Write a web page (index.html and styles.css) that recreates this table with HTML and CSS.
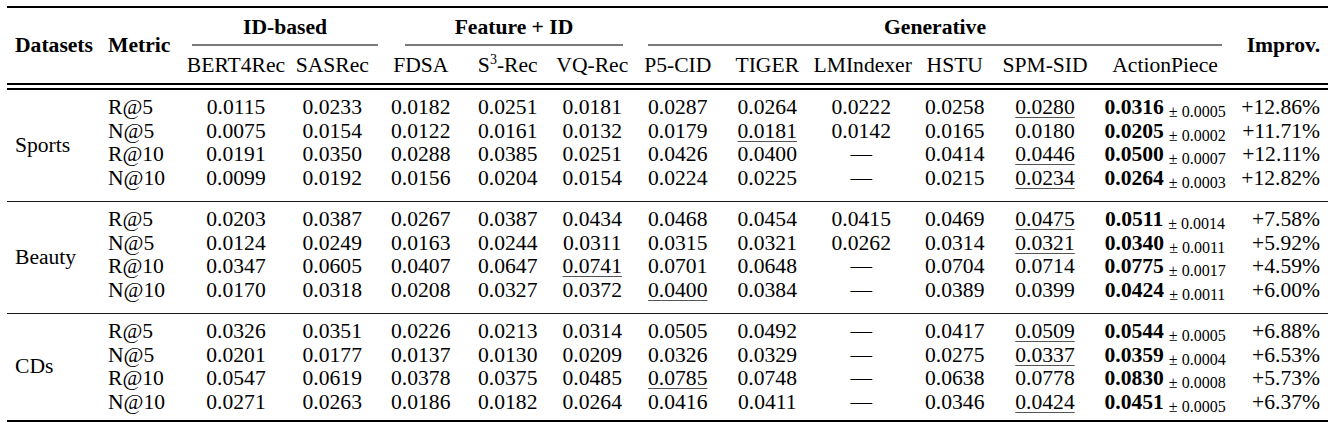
FILE: index.html
```html
<!DOCTYPE html>
<html lang="en">
<head>
    <meta charset="UTF-8">
    <meta name="viewport" content="width=device-width, initial-scale=1.0">
    <title>Results - ActionPiece</title>
    <link rel="stylesheet" href="styles.css">
</head>
<body>
    <table class="results">
        <colgroup>
            <col class="c-dataset">
            <col class="c-metric">
            <col class="c-bert">
            <col class="c-sas">
            <col class="c-fdsa">
            <col class="c-s3">
            <col class="c-vq">
            <col class="c-p5">
            <col class="c-tiger">
            <col class="c-lmi">
            <col class="c-hstu">
            <col class="c-spm">
            <col class="c-ap">
            <col class="c-imp">
        </colgroup>
        <thead>
            <tr class="groups">
                <th rowspan="2" class="span left">Datasets</th>
                <th rowspan="2" class="span left">Metric</th>
                <th colspan="2"><div class="cmid cmid-id">ID-based</div></th>
                <th colspan="3"><div class="cmid cmid-feat">Feature + ID</div></th>
                <th colspan="6"><div class="cmid cmid-gen">Generative</div></th>
                <th rowspan="2" class="span right">Improv.</th>
            </tr>
            <tr class="models">
                <th>BERT4Rec</th>
                <th>SASRec</th>
                <th>FDSA</th>
                <th>S<sup>3</sup>-Rec</th>
                <th>VQ-Rec</th>
                <th>P5-CID</th>
                <th>TIGER</th>
                <th>LMIndexer</th>
                <th>HSTU</th>
                <th>SPM-SID</th>
                <th>ActionPiece</th>
            </tr>
        </thead>

        <!-- Sports -->
        <tbody>
            <tr class="first">
                <td rowspan="4" class="name left">Sports</td>
                <td class="left">R@5</td>
                <td>0.0115</td><td>0.0233</td><td>0.0182</td><td>0.0251</td><td>0.0181</td>
                <td>0.0287</td><td>0.0264</td><td>0.0222</td><td>0.0258</td><td><u>0.0280</u></td>
                <td><b>0.0316</b><sub>± 0.0005</sub></td>
                <td class="right">+12.86%</td>
            </tr>
            <tr>
                <td class="left">N@5</td>
                <td>0.0075</td><td>0.0154</td><td>0.0122</td><td>0.0161</td><td>0.0132</td>
                <td>0.0179</td><td><u>0.0181</u></td><td>0.0142</td><td>0.0165</td><td>0.0180</td>
                <td><b>0.0205</b><sub>± 0.0002</sub></td>
                <td class="right">+11.71%</td>
            </tr>
            <tr>
                <td class="left">R@10</td>
                <td>0.0191</td><td>0.0350</td><td>0.0288</td><td>0.0385</td><td>0.0251</td>
                <td>0.0426</td><td>0.0400</td><td>—</td><td>0.0414</td><td><u>0.0446</u></td>
                <td><b>0.0500</b><sub>± 0.0007</sub></td>
                <td class="right">+12.11%</td>
            </tr>
            <tr class="last">
                <td class="left">N@10</td>
                <td>0.0099</td><td>0.0192</td><td>0.0156</td><td>0.0204</td><td>0.0154</td>
                <td>0.0224</td><td>0.0225</td><td>—</td><td>0.0215</td><td><u>0.0234</u></td>
                <td><b>0.0264</b><sub>± 0.0003</sub></td>
                <td class="right">+12.82%</td>
            </tr>
        </tbody>

        <!-- Beauty -->
        <tbody>
            <tr class="first">
                <td rowspan="4" class="name left">Beauty</td>
                <td class="left">R@5</td>
                <td>0.0203</td><td>0.0387</td><td>0.0267</td><td>0.0387</td><td>0.0434</td>
                <td>0.0468</td><td>0.0454</td><td>0.0415</td><td>0.0469</td><td><u>0.0475</u></td>
                <td><b>0.0511</b><sub>± 0.0014</sub></td>
                <td class="right">+7.58%</td>
            </tr>
            <tr>
                <td class="left">N@5</td>
                <td>0.0124</td><td>0.0249</td><td>0.0163</td><td>0.0244</td><td>0.0311</td>
                <td>0.0315</td><td>0.0321</td><td>0.0262</td><td>0.0314</td><td><u>0.0321</u></td>
                <td><b>0.0340</b><sub>± 0.0011</sub></td>
                <td class="right">+5.92%</td>
            </tr>
            <tr>
                <td class="left">R@10</td>
                <td>0.0347</td><td>0.0605</td><td>0.0407</td><td>0.0647</td><td><u>0.0741</u></td>
                <td>0.0701</td><td>0.0648</td><td>—</td><td>0.0704</td><td>0.0714</td>
                <td><b>0.0775</b><sub>± 0.0017</sub></td>
                <td class="right">+4.59%</td>
            </tr>
            <tr class="last">
                <td class="left">N@10</td>
                <td>0.0170</td><td>0.0318</td><td>0.0208</td><td>0.0327</td><td>0.0372</td>
                <td><u>0.0400</u></td><td>0.0384</td><td>—</td><td>0.0389</td><td>0.0399</td>
                <td><b>0.0424</b><sub>± 0.0011</sub></td>
                <td class="right">+6.00%</td>
            </tr>
        </tbody>

        <!-- CDs -->
        <tbody>
            <tr class="first">
                <td rowspan="4" class="name left">CDs</td>
                <td class="left">R@5</td>
                <td>0.0326</td><td>0.0351</td><td>0.0226</td><td>0.0213</td><td>0.0314</td>
                <td>0.0505</td><td>0.0492</td><td>—</td><td>0.0417</td><td><u>0.0509</u></td>
                <td><b>0.0544</b><sub>± 0.0005</sub></td>
                <td class="right">+6.88%</td>
            </tr>
            <tr>
                <td class="left">N@5</td>
                <td>0.0201</td><td>0.0177</td><td>0.0137</td><td>0.0130</td><td>0.0209</td>
                <td>0.0326</td><td>0.0329</td><td>—</td><td>0.0275</td><td><u>0.0337</u></td>
                <td><b>0.0359</b><sub>± 0.0004</sub></td>
                <td class="right">+6.53%</td>
            </tr>
            <tr>
                <td class="left">R@10</td>
                <td>0.0547</td><td>0.0619</td><td>0.0378</td><td>0.0375</td><td>0.0485</td>
                <td><u>0.0785</u></td><td>0.0748</td><td>—</td><td>0.0638</td><td>0.0778</td>
                <td><b>0.0830</b><sub>± 0.0008</sub></td>
                <td class="right">+5.73%</td>
            </tr>
            <tr class="last">
                <td class="left">N@10</td>
                <td>0.0271</td><td>0.0263</td><td>0.0186</td><td>0.0182</td><td>0.0264</td>
                <td>0.0416</td><td>0.0411</td><td>—</td><td>0.0346</td><td><u>0.0424</u></td>
                <td><b>0.0451</b><sub>± 0.0005</sub></td>
                <td class="right">+6.37%</td>
            </tr>
        </tbody>
    </table>
</body>
</html>
```

FILE: styles.css
```css
body {
    font-family: "Liberation Serif", "Times New Roman", serif;
    font-size: 21.6px;
    margin: 0;
    padding: 0;
    background: #fff;
    color: #000;
}

.results {
    table-layout: fixed;
    width: 1321px;
    margin: 6px 0 0 7px;
    border-collapse: separate;
    border-spacing: 0;
    border-top: 2px solid #000;
    border-bottom: 2px solid #000;
}

/* column widths, measured from the printed table */
.c-dataset { width: 93px; }
.c-metric { width: 83.5px; }
.c-bert { width: 105px; }
.c-sas { width: 87.5px; }
.c-fdsa { width: 89.5px; }
.c-s3 { width: 84.5px; }
.c-vq { width: 84.5px; }
.c-p5 { width: 86.5px; }
.c-tiger { width: 92.5px; }
.c-lmi { width: 95.5px; }
.c-hstu { width: 91.5px; }
.c-spm { width: 89px; }
.c-ap { width: 151px; }
.c-imp { width: 87.5px; }

.results th,
.results td {
    padding: 0;
    line-height: 23.5px;
    text-align: center;
    white-space: nowrap;
    vertical-align: middle;
}

.results th {
    font-weight: normal;
}

.results .left {
    text-align: left;
    padding-left: 8px;
}

.results .right {
    text-align: right;
    padding-right: 8px;
}

/* header */
.groups th {
    font-weight: bold;
    padding-top: 8px;
}

.groups th.span {
    padding-top: 0;
    padding-bottom: 0;
}

.cmid {
    padding-bottom: 4px;
    border-bottom: 2px solid #7a7a7a;
}

.cmid-id { margin: 0 -2px 0 8.5px; }
.cmid-feat { margin: 0 11.5px 0 29px; }
.cmid-gen { margin: 0 18.5px 0 13.5px; }

.models th {
    padding-top: 8px;
    padding-bottom: 6px;
}

.models sup {
    font-size: 14px;
    line-height: 0;
    vertical-align: 8px;
}

/* body groups */
tbody:first-of-type tr.first td {
    border-top: 7px double #000;
}

tbody + tbody tr.first td {
    border-top: 1px solid #1a1a1a;
}

tr.first td {
    padding-top: 6px;
}

tr.last td {
    padding-bottom: 11px;
}

tbody:last-of-type tr.last td {
    padding-bottom: 6px;
}

.results td.name {
    padding-bottom: 6px;
}

.results u {
    text-decoration: underline;
    text-decoration-color: #555;
    text-decoration-thickness: 1px;
    text-underline-offset: 3px;
}

.results sub {
    font-size: 16px;
    line-height: 0;
    vertical-align: -3px;
    margin-left: 5px;
}
```
